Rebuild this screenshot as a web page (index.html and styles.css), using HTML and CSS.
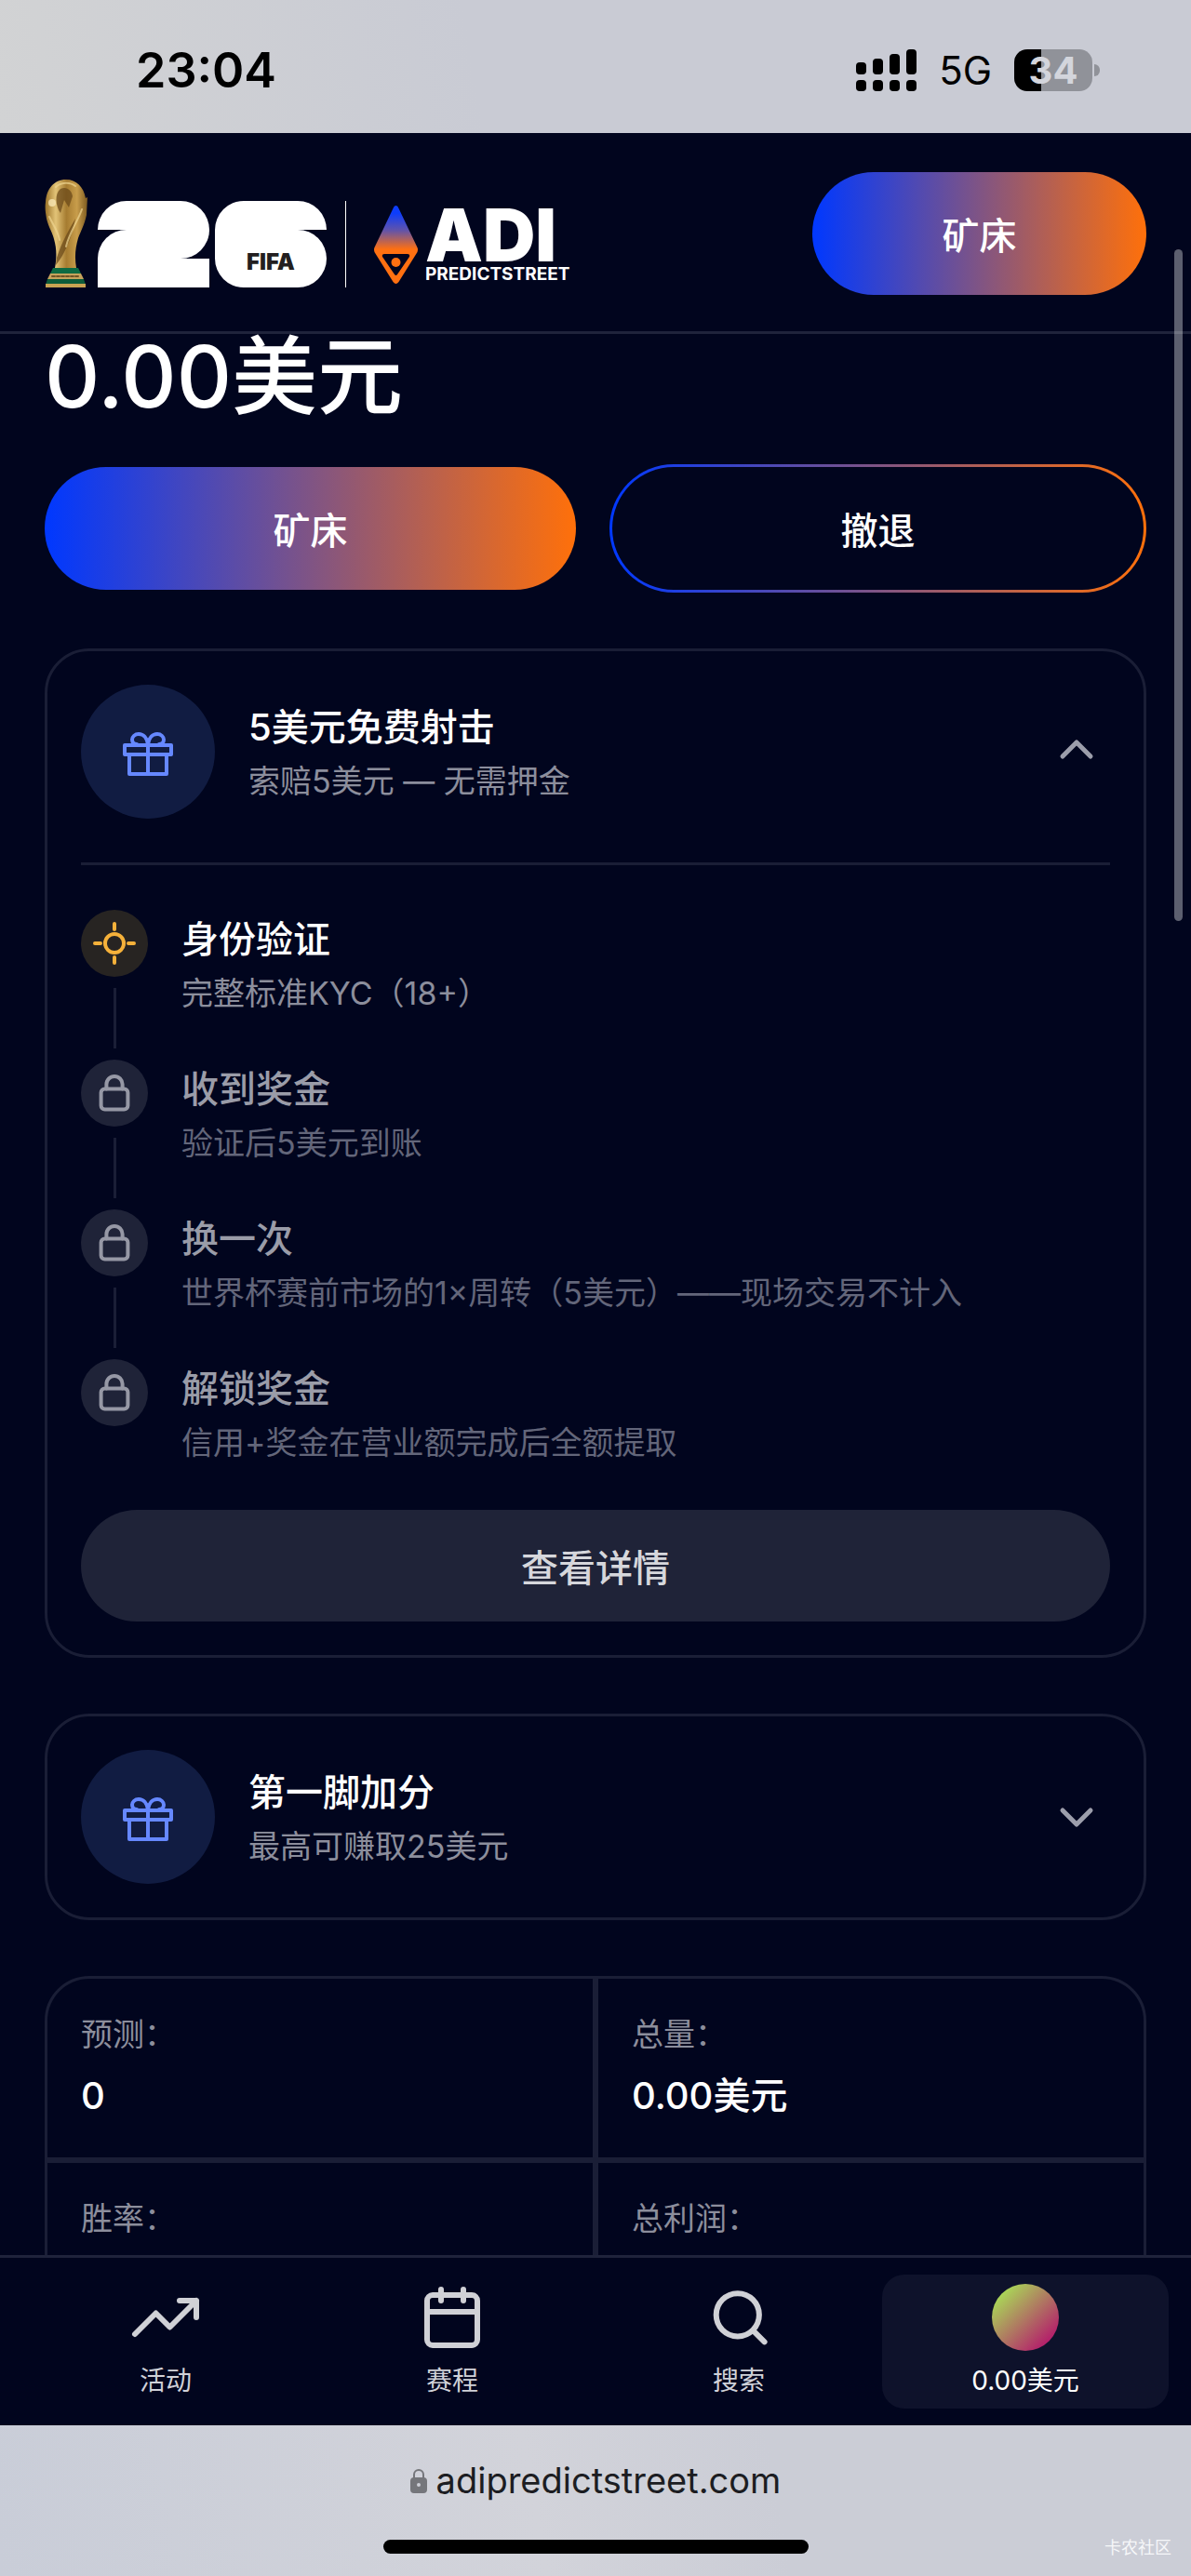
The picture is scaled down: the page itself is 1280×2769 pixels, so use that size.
FILE: index.html
```html
<!DOCTYPE html>
<html lang="zh-CN">
<head>
    <meta charset="UTF-8">
    <meta name="viewport" content="width=device-width, initial-scale=1.0">
    <title>ADI Predictstreet</title>
    <link rel="stylesheet" href="styles.css">
</head>
<body>
    <!-- shared icons -->
    <svg class="sprite" aria-hidden="true">
        <symbol id="gift" viewBox="0 0 64 64">
            <rect x="7" y="25" width="50" height="10"/>
            <path d="M12 35v21h40V35M32 25v31"/>
            <path d="M32 24c-1-7-5-11-10-11-4 0-7 3-7 6s2 5 5 5M32 24c1-7 5-11 10-11 4 0 7 3 7 6s-2 5-5 5"/>
        </symbol>
        <symbol id="lock" viewBox="0 0 24 24">
            <rect x="4.8" y="9.8" width="14.4" height="10.9" rx="2"/>
            <path d="M7.7 9.8V7.3a4.3 4.3 0 0 1 8.6 0v2.5"/>
        </symbol>
    </svg>

    <div class="phone">
        <div class="status-bar">
            <span class="clock">23:04</span>
            <div class="status-icons">
                <svg class="signal" viewBox="0 0 65 46">
                    <rect x="0" y="14" width="11" height="13" rx="4"/>
                    <rect x="18" y="10" width="11" height="17" rx="4"/>
                    <rect x="36" y="5" width="11" height="22" rx="4"/>
                    <rect x="54" y="0" width="11" height="27" rx="4"/>
                    <rect x="0" y="33" width="11" height="12" rx="4"/>
                    <rect x="18" y="33" width="11" height="12" rx="4"/>
                    <rect x="36" y="33" width="11" height="12" rx="4"/>
                    <rect x="54" y="33" width="11" height="12" rx="4"/>
                </svg>
                <span class="network">5G</span>
                <span class="battery">34</span>
            </div>
        </div>

        <header class="header">
            <a href="#" class="brand">
                <svg class="trophy" viewBox="0 0 47 116">
                    <defs>
                        <linearGradient id="gold" x1="0" x2="1" y1="0" y2="0">
                            <stop offset="0" stop-color="#9a7228"/>
                            <stop offset=".25" stop-color="#e2c377"/>
                            <stop offset=".5" stop-color="#a67c31"/>
                            <stop offset=".75" stop-color="#c89d4b"/>
                            <stop offset="1" stop-color="#7d5a20"/>
                        </linearGradient>
                    </defs>
                    <path fill="url(#gold)" d="M23 0C10 0 2 10 1 24c-1 7 0 11 1 18 2 9 6 14 8 22 3 10 3 20 1 31h23c-2-11-1-22 2-32 3-8 7-15 9-25l1-19-2 1C42 8 34 0 23 0z"/>
                    <path fill="#6b4a1a" d="M17 10c6-3 12 1 13 8l-4 12-5-8-4 14c-5-7-7-20 0-26zM33 42c-7 12-15 26-20 42l-1 8c10-12 17-30 21-50z" opacity=".75"/>
                    <path fill="none" stroke="#f0d692" stroke-width="2" d="M5 40c4 9 9 14 11 25M40 32c-4 12-14 26-17 40M12 8c5-5 15-6 21-1" opacity=".7"/>
                    <circle cx="8" cy="25" r="4" fill="#f7e6b4" opacity=".8"/>
                    <path fill="#0d6b43" d="M9 95h27l3 6H6z"/>
                    <path fill="#c6a35c" d="M6 101h33l3 6H3z"/>
                    <path fill="#0d5c3a" d="M3 107h39l2 6H1z"/>
                    <path fill="#c9a352" d="M1 112h43v4H1z"/>
                    <path stroke="#6f5425" stroke-width="2" stroke-dasharray="3 2" d="M8 104h30"/>
                </svg>
                <span class="digit two"><i></i><i></i><i></i><i></i></span>
                <span class="digit six"><i></i><i></i><i></i><b class="fifa">FIFA</b></span>
                <span class="rule"></span>
                <svg class="gem" viewBox="0 0 47 84">
                    <defs>
                        <linearGradient id="gemFill" x1="0" x2="0" y1="0" y2="1">
                            <stop offset=".1" stop-color="#0d3dfb"/>
                            <stop offset=".32" stop-color="#6354a8"/>
                            <stop offset=".56" stop-color="#ff7011"/>
                        </linearGradient>
                    </defs>
                    <path fill="url(#gemFill)" fill-rule="evenodd" d="M23.500 0q2 0 3 3L46.500 45q1 2 0 5L26.500 82q-3 4-6 0L.5 50q-1-3 0-5L20.500 3q1-3 3-3zM11 52q-3 0-2 3l13 19q1.500 2 3 0l13-19q1-3-2-3z"/>
                    <circle cx="23.500" cy="61" r="5" fill="#ff7011"/>
                </svg>
                <span class="wordmark">
                    <span class="adi">ADI</span>
                    <span class="street">PREDICTSTREET</span>
                </span>
            </a>
            <button type="button" class="btn btn-primary">矿床</button>
        </header>

        <main class="content">
            <h1 class="balance">0.00美元</h1>
            <div class="actions">
                <button type="button" class="btn btn-primary">矿床</button>
                <button type="button" class="btn btn-outline">撤退</button>
            </div>

            <section class="card">
                <button type="button" class="card-head" aria-expanded="true">
                    <span class="badge"><svg><use href="#gift"/></svg></span>
                    <span class="card-text">
                        <span class="title">5美元免费射击</span>
                        <span class="sub">索赔5美元 — 无需押金</span>
                    </span>
                    <svg class="chevron" viewBox="0 0 72 72"><path d="M21 41l15-15 15 15"/></svg>
                </button>
                <ol class="steps">
                    <li class="step current">
                        <span class="dot">
                            <svg viewBox="0 0 48 48"><circle cx="24" cy="24" r="10"/><path d="M24 3v6M24 39v6M3 24h6M39 24h6"/></svg>
                        </span>
                        <div>
                            <p class="title">身份验证</p>
                            <p class="sub">完整标准KYC（18+）</p>
                        </div>
                    </li>
                    <li class="step">
                        <span class="dot"><svg><use href="#lock"/></svg></span>
                        <div>
                            <p class="title">收到奖金</p>
                            <p class="sub">验证后5美元到账</p>
                        </div>
                    </li>
                    <li class="step">
                        <span class="dot"><svg><use href="#lock"/></svg></span>
                        <div>
                            <p class="title">换一次</p>
                            <p class="sub">世界杯赛前市场的1×周转（5美元）——现场交易不计入</p>
                        </div>
                    </li>
                    <li class="step">
                        <span class="dot"><svg><use href="#lock"/></svg></span>
                        <div>
                            <p class="title">解锁奖金</p>
                            <p class="sub">信用+奖金在营业额完成后全额提取</p>
                        </div>
                    </li>
                </ol>
                <button type="button" class="btn btn-muted">查看详情</button>
            </section>

            <section class="card">
                <button type="button" class="card-head" aria-expanded="false">
                    <span class="badge"><svg><use href="#gift"/></svg></span>
                    <span class="card-text">
                        <span class="title">第一脚加分</span>
                        <span class="sub">最高可赚取25美元</span>
                    </span>
                    <svg class="chevron" viewBox="0 0 72 72"><path d="M21 29l15 15 15-15"/></svg>
                </button>
            </section>

            <dl class="stats">
                <div><dt>预测：</dt><dd>0</dd></div>
                <div><dt>总量：</dt><dd>0.00美元</dd></div>
                <div><dt>胜率：</dt><dd></dd></div>
                <div><dt>总利润：</dt><dd></dd></div>
            </dl>
        </main>

        <nav class="tabs">
            <a href="#">
                <svg viewBox="0 0 24 24"><path d="M23 6l-9.500 9.500-5-5L1 18M17 6h6v6"/></svg>
                活动
            </a>
            <a href="#">
                <svg viewBox="0 0 24 24"><rect x="3" y="4" width="18" height="18" rx="2"/><path d="M8 2v4M16 2v4M3 10h18"/></svg>
                赛程
            </a>
            <a href="#">
                <svg viewBox="0 0 24 24"><circle cx="11.600" cy="11.100" r="7.700"/><path d="M17.200 16.800l4 4"/></svg>
                搜索
            </a>
            <a href="#" class="active">
                <span class="avatar"></span>
                0.00美元
            </a>
        </nav>

        <footer class="browser-bar">
            <div class="url">
                <svg viewBox="0 0 18 27"><path d="M4 12V7a5 5 0 0 1 10 0v5" fill="none" stroke="#75767b" stroke-width="2"/><rect y="10" width="18" height="17" rx="4" fill="#75767b"/><circle cx="9" cy="18" r="2" fill="#cdced6"/></svg>
                adipredictstreet.com
            </div>
            <div class="home-indicator"></div>
            <span class="watermark">卡农社区</span>
        </footer>

        <div class="scroll-thumb"></div>
    </div>
</body>
</html>
```
FILE: styles.css
```css
* {
    box-sizing: border-box;
}
body {
    margin: 0;
    background: #01051e;
    color: #fff;
    font-family: Inter, "Noto Sans CJK SC", sans-serif;
    font-size: 34px;
}
h1, p, ol, dl, dd {
    margin: 0;
    padding: 0;
}
button {
    font-family: inherit;
    color: inherit;
    border: none;
    background: none;
    cursor: pointer;
}
a {
    color: inherit;
    text-decoration: none;
}
svg {
    display: block;
    fill: none;
    stroke-linecap: round;
    stroke-linejoin: round;
}
.sprite {
    position: absolute;
    width: 0;
    height: 0;
}
.phone {
    position: relative;
    display: flex;
    flex-direction: column;
    height: 100vh;
    overflow: hidden;
}

/* status bar */
.status-bar {
    flex: none;
    display: flex;
    justify-content: space-between;
    align-items: center;
    height: 143px;
    padding: 8px 106px 0 146px;
    background: linear-gradient(80deg, #d2d3d4, #c9cbd4 40%);
    color: #000;
}
.clock {
    font-size: 52px;
    font-weight: 600;
}
.status-icons {
    display: flex;
    align-items: center;
    gap: 24px;
}
.signal {
    width: 65px;
    height: 46px;
    fill: #000;
}
.network {
    font-size: 42px;
}
.battery {
    position: relative;
    width: 84px;
    height: 45px;
    border-radius: 14px;
    background: linear-gradient(90deg, #000 29px, #909299 29px);
    color: #d3d5dc;
    font-size: 40px;
    font-weight: 700;
    line-height: 45px;
    text-align: center;
}
.battery::after {
    content: "";
    position: absolute;
    right: -8px;
    top: 16px;
    width: 6px;
    height: 13px;
    border-radius: 0 6px 6px 0;
    background: #909299;
}

/* header */
.header {
    flex: none;
    display: flex;
    justify-content: space-between;
    align-items: center;
    height: 216px;
    padding: 2px 48px 0;
    border-bottom: 3px solid #1f233b;
}
.header .btn {
    width: 359px;
}
.brand {
    display: flex;
    align-items: flex-end;
}
.trophy {
    width: 47px;
    height: 116px;
    margin-right: 10px;
}
.digit {
    position: relative;
    display: grid;
    grid-template-columns: 60px 60px;
    grid-template-rows: 31px 31px 31px;
    margin-right: 6px;
}
.digit i {
    background: #fff;
}
.two i:nth-child(1) {
    border-radius: 31px 0 0 0;
}
.two i:nth-child(2) {
    grid-area: 1 / 2 / 3 / 3;
    border-radius: 0 31px 31px 0;
}
.two i:nth-child(3) {
    grid-area: 2 / 1 / 4 / 2;
    border-radius: 31px 0 0 0;
}
.two i:nth-child(4) {
    grid-area: 3 / 2;
}
.six i:nth-child(1) {
    grid-area: 1 / 1 / 4 / 2;
    border-radius: 31px 0 0 31px;
}
.six i:nth-child(2) {
    grid-area: 1 / 2;
    border-radius: 0 31px 0 0;
}
.six i:nth-child(3) {
    grid-area: 2 / 2 / 4 / 3;
    border-radius: 0 31px 31px 0;
}
.fifa {
    position: absolute;
    left: 34px;
    bottom: 12px;
    color: #231f20;
    font-size: 24px;
    font-weight: 900;
    line-height: 30px;
}
.rule {
    width: 1px;
    height: 93px;
    margin: 0 30px 0 14px;
    background: #fff;
}
.gem {
    width: 47px;
    height: 84px;
    margin: 0 8px 4px 0;
}
.wordmark {
    display: flex;
    flex-direction: column;
    padding-bottom: 4px;
}
.adi {
    font-size: 78px;
    font-weight: 900;
    line-height: 64px;
}
.street {
    font-size: 19px;
    font-weight: 700;
    line-height: 20px;
}

/* buttons */
.btn {
    height: 132px;
    padding: 0 36px;
    border-radius: 72px;
    font-size: 40px;
    font-weight: 500;
}
.btn-primary {
    background: linear-gradient(90deg, #0038ff, #ff700a);
}
.btn-outline {
    height: 138px;
    border: 3px solid transparent;
    background: linear-gradient(#01051e, #01051e) padding-box, linear-gradient(90deg, #0038ff, #ff700a) border-box;
}
.btn-muted {
    width: 100%;
    height: 120px;
    margin-top: 46px;
    background: #1f2338;
    color: #d6d7dc;
}

/* page */
.content {
    flex: 1;
    min-height: 0;
    padding: 0 48px;
    overflow-y: auto;
    scrollbar-width: none;
}
.balance {
    font-size: 92px;
    font-weight: 500;
    line-height: 92px;
}
.actions {
    display: flex;
    align-items: center;
    gap: 36px;
    margin: 48px 0 60px;
}
.actions .btn {
    box-sizing: content-box;
    height: 132px;
    padding: 0;
    flex: 1;
}
.card {
    margin-bottom: 60px;
    padding: 36px;
    border: 3px solid #1a1e36;
    border-radius: 48px;
}
.card-head {
    display: flex;
    align-items: center;
    gap: 36px;
    width: 100%;
    padding: 0;
    text-align: left;
}
.badge {
    display: flex;
    align-items: center;
    justify-content: center;
    width: 144px;
    height: 144px;
    border-radius: 50%;
    background: #111c42;
}
.badge svg {
    width: 64px;
    height: 64px;
    stroke: #6688ff;
    stroke-width: 4px;
}
.card-text {
    flex: 1;
    display: flex;
    flex-direction: column;
}
.chevron {
    width: 72px;
    height: 72px;
    stroke: #9c9eab;
    stroke-width: 5px;
}
.title {
    font-size: 40px;
    font-weight: 500;
    line-height: 64px;
}
.sub {
    color: #8c8e9c;
    font-size: 34px;
    font-weight: 400;
    line-height: 52px;
}

/* bonus steps */
.steps {
    margin-top: 47px;
    padding-top: 48px;
    border-top: 3px solid #1a1e36;
    list-style: none;
}
.step {
    position: relative;
    display: flex;
    gap: 36px;
    min-height: 161px;
}
.step:last-child {
    min-height: 0;
}
.step:not(:last-child)::after {
    content: "";
    position: absolute;
    left: 35px;
    top: 84px;
    bottom: 12px;
    width: 3px;
    background: #1a1e36;
}
.dot {
    display: flex;
    align-items: center;
    justify-content: center;
    width: 72px;
    height: 72px;
    border-radius: 50%;
    background: #1f2338;
}
.dot svg {
    width: 48px;
    height: 48px;
    stroke: #9698a5;
    stroke-width: 2px;
}
.step .title {
    color: #9a9ca8;
}
.step .sub {
    color: #63667a;
}
.current .dot {
    background: #272422;
}
.current .dot svg {
    stroke: #f5b13a;
    stroke-width: 4px;
}
.current .title {
    color: #fff;
}
.current .sub {
    color: #8c8e9c;
}

/* stats */
.stats {
    display: grid;
    grid-template-columns: 1fr 1fr;
    gap: 6px;
    border: 3px solid #1a1e36;
    border-radius: 48px;
    background: #1a1e36;
    overflow: hidden;
}
.stats div {
    min-height: 192px;
    padding: 36px;
    background: #01051e;
}
.stats dt {
    color: #8c8e9c;
    line-height: 48px;
}
.stats dd {
    margin-top: 12px;
    font-size: 40px;
    font-weight: 500;
    line-height: 60px;
}

/* bottom tabs */
.tabs {
    flex: none;
    display: flex;
    padding: 18px 24px;
    border-top: 3px solid #1f233b;
    color: #d0d1d8;
    font-size: 28px;
    line-height: 40px;
}
.tabs a {
    flex: 1;
    display: flex;
    flex-direction: column;
    align-items: center;
    justify-content: center;
    gap: 12px;
    height: 144px;
    border-radius: 24px;
}
.tabs svg {
    width: 72px;
    height: 72px;
    stroke: #d0d1d6;
    stroke-width: 2px;
    overflow: visible;
}
.tabs .active {
    background: #0e122b;
    color: #fff;
}
.avatar {
    width: 72px;
    height: 72px;
    border-radius: 50%;
    background: linear-gradient(135deg, #a8ee55 5%, #b5136c 90%);
}

/* browser bar */
.browser-bar {
    position: relative;
    flex: none;
    display: flex;
    flex-direction: column;
    align-items: center;
    justify-content: space-between;
    height: 162px;
    padding: 34px 0 24px;
    background: linear-gradient(80deg, #c9cdd8, #d2d3da 45%, #cbcdd6 65%);
    color: #1c1d22;
}
.url {
    display: flex;
    align-items: center;
    gap: 10px;
    font-size: 38px;
    line-height: 50px;
}
.url svg {
    width: 18px;
    height: 27px;
}
.home-indicator {
    width: 457px;
    height: 15px;
    border-radius: 8px;
    background: #000;
}
.watermark {
    position: absolute;
    right: 21px;
    bottom: 18px;
    color: #f6f7f9;
    font-size: 18px;
    line-height: 24px;
}
.scroll-thumb {
    position: absolute;
    right: 9px;
    top: 268px;
    width: 9px;
    height: 722px;
    border-radius: 5px;
    background: rgba(255, 255, 255, 0.36);
}
```
